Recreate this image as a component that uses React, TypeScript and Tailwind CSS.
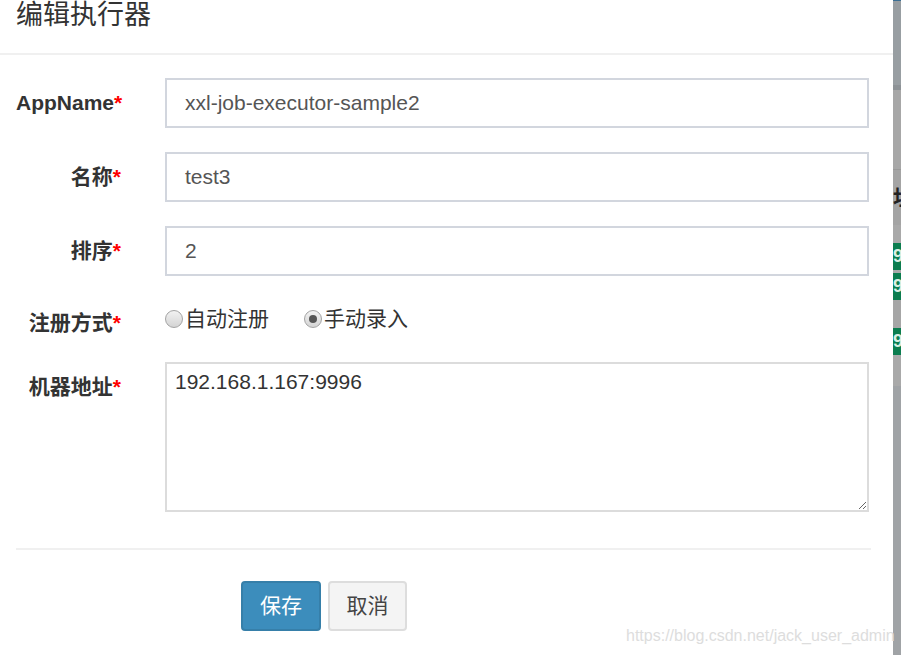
import React from "react";

const font = { fontFamily: '"Liberation Sans", "Noto Sans CJK SC", sans-serif' };

function Label({ text }: { text: string }) {
  return (
    <div className="w-[105px] shrink-0 pt-[10px] text-right text-[21px] font-bold leading-[30px] text-[#333]">
      {text}
      <span className="text-[#ff0000]">*</span>
    </div>
  );
}

function Radio({ checked, label }: { checked?: boolean; label: string }) {
  return (
    <div className="flex items-center">
      <span className="flex h-[18px] w-[18px] items-center justify-center rounded-full border border-[#a3a3a3] bg-gradient-to-b from-[#f2f2f2] to-[#d4d4d4]">
        {checked && <span className="h-[8px] w-[8px] rounded-full bg-[#555]" />}
      </span>
      <span className="ml-[2px] text-[21px] leading-[30px] text-[#333]">{label}</span>
    </div>
  );
}

export default function App() {
  return (
    <div className="flex h-[655px] w-[901px] overflow-hidden bg-white" style={font}>
      <div className="relative w-[893px] shrink-0 bg-white">
        <div className="h-[55px] border-b-2 border-[#f0f0f0] pl-[16px]">
          <div className="text-[27px] leading-[30px] text-[#333]">编辑执行器</div>
        </div>
        <div className="w-[871px] pl-[16px] pt-[23px]">
          <div className="mb-[24px] flex">
            <Label text="AppName" />
            <div className="ml-[44px] flex h-[50px] w-[704px] items-center border-2 border-[#d2d6de] pl-[18px] text-[21px] text-[#555]">
              xxl-job-executor-sample2
            </div>
          </div>
          <div className="mb-[24px] flex">
            <Label text="名称" />
            <div className="ml-[44px] flex h-[50px] w-[704px] items-center border-2 border-[#d2d6de] pl-[18px] text-[21px] text-[#555]">
              test3
            </div>
          </div>
          <div className="mb-[22px] flex">
            <Label text="排序" />
            <div className="ml-[44px] flex h-[50px] w-[704px] items-center border-2 border-[#d2d6de] pl-[18px] text-[21px] text-[#555]">
              2
            </div>
          </div>
          <div className="mb-[24px] flex h-[40px]">
            <Label text="注册方式" />
            <div className="ml-[44px] flex gap-[35px] pt-[2px]">
              <Radio label="自动注册" />
              <Radio checked label="手动录入" />
            </div>
          </div>
          <div className="flex">
            <Label text="机器地址" />
            <textarea
              className="ml-[44px] h-[150px] w-[704px] border-2 border-[#dcdcdc] px-[8px] pt-[3px] text-[21px] leading-[30px] text-[#333] outline-none"
              style={font}
              defaultValue="192.168.1.167:9996"
            />
          </div>
          <div className="mt-[36px] h-[2px] w-[855px] bg-[#f0f0f0]" />
          <div className="flex gap-[7px] pl-[225px] pt-[31px]">
            <button className="flex h-[50px] w-[80px] items-center justify-center rounded-[4px] border-2 border-[#367fa9] bg-[#3c8dbc] text-[21px] text-white">
              保存
            </button>
            <button className="flex h-[50px] w-[79px] items-center justify-center rounded-[4px] border-2 border-[#dddddd] bg-[#f4f4f4] text-[21px] text-[#444]">
              取消
            </button>
          </div>
        </div>
        <div className="absolute left-[626px] top-[624px] whitespace-nowrap text-[16px] leading-[24px] text-[#dddddd]">
          https://blog.csdn.net/jack_user_admin
        </div>
      </div>
      <div className="flex flex-1 flex-col overflow-hidden">
        <div className="h-[1px] bg-[#3b6f94]" />
        <div className="h-[84px] bg-[#989ea2]" />
        <div className="h-[5px] bg-[#8d9296]" />
        <div className="h-[79px] bg-[#a7a7a7]" />
        <div className="h-[1px] bg-[#999999]" />
        <div className="flex h-[55px] items-center overflow-hidden bg-[#a4a4a4] text-[21px] font-bold leading-[30px] text-[#222]">
          址
        </div>
        <div className="h-[18px] bg-[#a9a9a9]" />
        <div className="flex h-[27px] items-center overflow-hidden bg-[#0b7d4f] text-[18px] font-bold text-[#d8eee2]">9</div>
        <div className="h-[3px] bg-[#a9a9a9]" />
        <div className="flex h-[27px] items-center overflow-hidden bg-[#0b7d4f] text-[18px] font-bold text-[#d8eee2]">9</div>
        <div className="h-[28px] bg-[#a6a6a6]" />
        <div className="flex h-[27px] items-center overflow-hidden bg-[#0b7d4f] text-[18px] font-bold text-[#d8eee2]">9</div>
        <div className="h-[31px] bg-[#a9a9a9]" />
        <div className="flex-1 bg-[#a0a3a6]" />
      </div>
    </div>
  );
}
